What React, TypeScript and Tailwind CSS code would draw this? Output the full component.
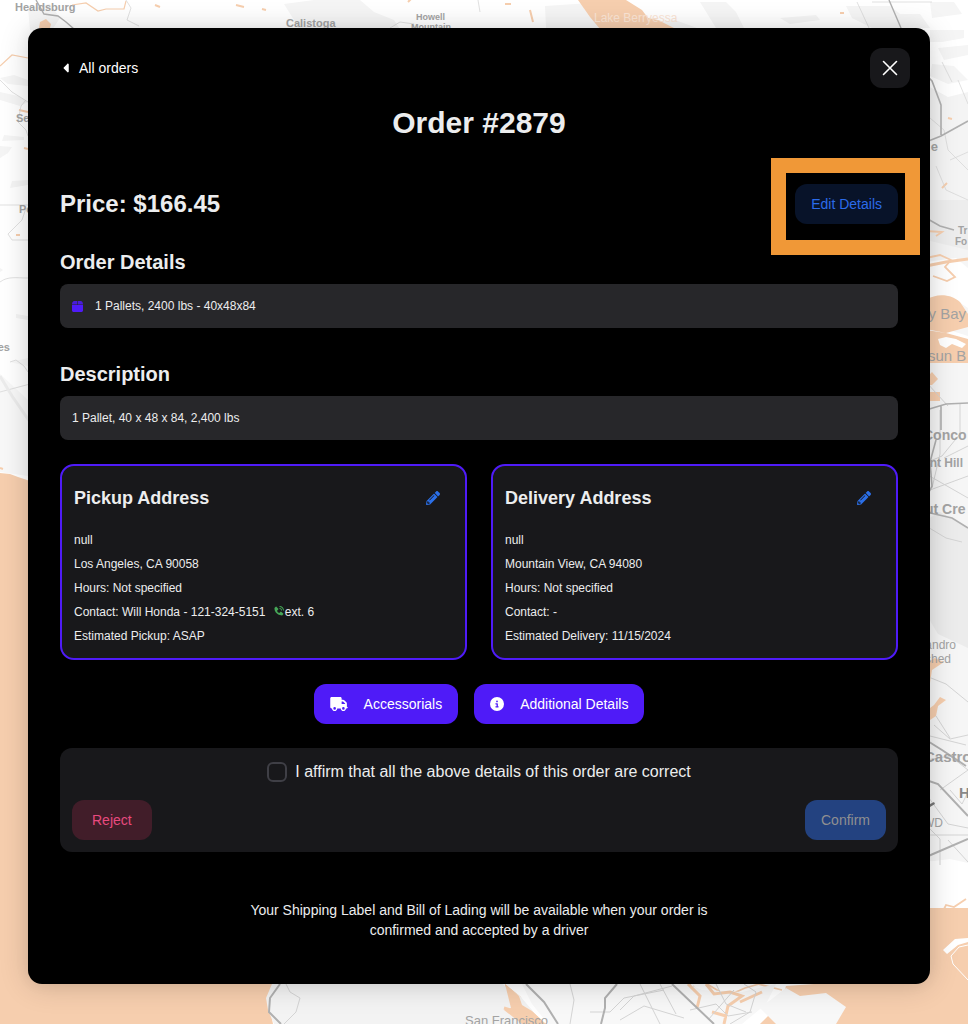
import { useState } from "react";
import type { ReactNode } from "react";
import { BiSolidPhoneCall } from "react-icons/bi";
import { FaPencilAlt } from "react-icons/fa";
import { FaCaretLeft, FaCircleInfo, FaTruck } from "react-icons/fa6";

const pickup = [
  "null",
  "Los Angeles, CA 90058",
  "Hours: Not specified",
  <>
    Contact: Will Honda - 121-324-5151{" "}
    <a href="tel:1213245151" aria-label="Call Will Honda" className="ml-1 inline-block align-baseline">
      <BiSolidPhoneCall className="mb-1 inline size-3 text-[#46a758]" />
    </a>
    ext. 6
  </>,
  "Estimated Pickup: ASAP",
];

const delivery = [
  "null",
  "Mountain View, CA 94080",
  "Hours: Not specified",
  "Contact: -",
  "Estimated Delivery: 11/15/2024",
];

function PackageIcon() {
  return (
    <svg viewBox="0 0 11 11" className="size-[11px] text-[#4f1bf8]" fill="currentColor" aria-hidden="true">
      <path d="M2.4 0h2.8v3.4H0C0 1.500.9 0 2.400 0Zm3.400 0h2.800C10.100 0 11 1.500 11 3.400H5.800Z" opacity=".85" />
      <path d="M0 4h11v5.600c0 .8-.6 1.400-1.400 1.400H1.400C.6 11 0 10.400 0 9.600Z" />
    </svg>
  );
}

function CloseIcon() {
  return (
    <svg viewBox="0 0 16 16" className="size-4" fill="none" stroke="currentColor" strokeWidth="1.6" strokeLinecap="round" aria-hidden="true">
      <path d="M1.5 1.5l13 13M14.5 1.5l-13 13" />
    </svg>
  );
}

function MapBackground() {
  return (
    <svg
      viewBox="0 0 968 1024"
      preserveAspectRatio="xMinYMin slice"
      className="absolute inset-0 h-full w-full font-['Liberation_Sans',Arial,sans-serif]"
      aria-hidden="true"
    >
      <rect width="968" height="1024" fill="#fff" />
      {/* relief */}
      <g fill="#f5f5f5">
        <path d="M28 8l22-4 10 14-8 12H30zM284 4l30-4h46l14 12 20 8 8 12H300l-6-12zM545 6l60-4 40 22 30-4 22 8H546zM700 2h26l10 10 8 16h-28z" />
        <path d="M0 78l14-3 14 5v6l-20-2zM0 92l18 4 10 6-8 4-20-6zM4 135l20 2v3l-22 1zM0 146l12 1-4 6-8 5zM12 181l16-1v5l-18 3zM0 268l3 2-3 2zM16 314l12 2v4l-12-2z" />
        <path d="M10 362l18-4v8l-10-2zM0 374l28 26v76l-28-4z" fill="#f8f8f8" />
        <path d="M780 18l36-3 4 5-30 4zM846 6h44l10 8h20l10 14h-58l-20-10zM930 2h24l8 12-30 4zM930 30h34v8l-22 4h-12zM938 48l30-3v10l-24 5zM932 64l22 2 14 14-20 4-18-8z" />
      </g>
      <path d="M926 85l22 12 20-5v170l-14 4-28-6z" fill="#f4f4f4" />
      <path d="M926 200h42v50l-42-10z" fill="#ededed" />
      <path d="M926 260h42v610l-42-10z" fill="#f6f6f6" />
      <path d="M926 520l14-8 28 16v120l-30-14-12-20z" fill="#ececec" />
      <path d="M926 262l30-4 12 10v40l-18-12-24 2zM930 324l38 12v12l-38-4z" fill="#fff" />
      <path d="M926 862l24-3 18 4v48h-42z" fill="#fff" />

      {/* water */}
      <g fill="#f6ceae">
        <path d="M0 473l10 1 8 3 12 4v480l236 6 12 12-10 20 5 25H0z" />
        <path d="M926 908h42v116H760l20-20 6-18 140-10z" />
        <path d="M926 300c12-8 26-5 34 2l8 12v13l-22 6-20-4zM926 330l20 3 22 6v24h-42z" />
        <path d="M578 0h48l16 10 6 8 10 2 18 9h-76l-10-12zM926 378l6-6 6 7-6 6h-6zM926 392h14v9h-14zM926 665l8-7 10 4-12 8-2 13-4-2z" />
        <path d="M40 22l6-3 5 5-1 4H39zM505 984l16 13 2 9 9 5 14 14h-25l-22-15 9-1-3-15z" />
        <path d="M926 711l8-6 6-8 6 3-8 6-2 10-6 4-4 6z" />
      </g>
      <path d="M938 339l8-2 10 2 10 5-4 4-10-4-6 4-6-3z" fill="#fff" />
      <g fill="none" stroke="#f6ceae" strokeWidth="2">
        <path d="M0 66l12-11 16 3M72 5l14-2 12 8 8-2 18 0 2-8" strokeWidth="1.2" />
        <path d="M926 266l20-4 22-3" strokeWidth="3" />
        <path d="M926 258l14-3 11 5-6 7 10 10-8 4-14-5M926 231l16 1-6 4M942 913l4-8 8 2 12-8M926 667l6-6M693 986l6 12 14 2 4 8-12 16M707 984l20 12 18-8 14-4M758 984l24 6M735 1010l16-10M690 984l4 14" strokeWidth="1.8" />
        <path d="M19 110l9 2M24 148l4 1M408 2l3-3M155 5l5 2M236 5l8 2M262 9l4 1M948 118l4 1M942 188l5-5M16 235h4M0 468l3 1M505 4h6M530 10l3 12M840 13h4" />
      </g>
      <path d="M266 984h236l18 12 12 14 10 14H274l-6-14-2-12 6-14z" fill="#f3f3f3" />
      <path d="M522 984h166l14 6 40 2 34-8-10 20-24 20H548l-16-20z" fill="#f8f8f8" />
      <path d="M760 1008l26-20 14 8 26-3 20 14-10 17h-60z" fill="#f8f8f8" />
      <path d="M505 984l14 12 3 9 10 6 14 13h-24l-18-14 7-2-3-12z" fill="#f6ceae" />
      <g fill="none" stroke="#f6ceae" strokeWidth="3">
        <path d="M504 1008l20 6M688 984l12 12-3 12M706 984l8 10 16-2 12 4-14 10-4 18M712 1012l14 4M740 1002l22-10" />
      </g>

      {/* shoreline spits */}
      <path d="M943 950l12-11 13-1v4l-10 3-11 9z" fill="#fff" />
      <path d="M968 945l-9 2-8 9 2 8 15 16" fill="none" stroke="#fff" strokeWidth="1" />

      {/* minor roads */}
      <g fill="none" stroke="#d4d4d4">
        <path d="M26 100l-5 6-3 16 8 8 2 6M0 80l12 12 16 10M0 205h28M26 208l-4 12-14 14 4 6h16M0 282c8-6 16-4 28-4M10 362l6-2 8 6 4 6M0 392l30-8" strokeWidth="0.7" />
        <path d="M0 376l12 20 18 26" stroke="#ececec" strokeWidth="3" />
        <path d="M126 0l5 8-4 12 12 6M390 28l10-6 14 2M478 0l2 12M857 2l12 26M872 2h60M942 62l10 20M930 118l14 12 4 20 20 20M950 160l18-8M936 166l10 24 22 10M958 80l10 24" strokeWidth="0.7" />
        <path d="M926 382l22 24M940 410v44l-8 34M960 404v30l-18 22-14 6M944 458l24-12M926 474l42 24M930 490l38-14M926 526l20 12 16 4M926 676l20 8 22 18M934 725l16 14 18-4M926 735l40 10M936 716l14 22M926 760l24-4 18 14M940 790l28-20M926 794l22 30 20 4M940 865v-26l-12-12M926 835h42M948 840l20 22M950 790l12 14 6-12" />
        <path d="M286 984l4 8 10 6-4 14-12 12M570 984l4 16-4 24M590 1012h20l14-14 40-8M620 1010l14-14 38-10M640 984l10 20 10 20M660 984l16 30M620 1020l24-14 40 12M690 1010l26-6 12 12 24-4M708 1020l26-30M744 984l12 8-6 20-20 12M716 984l10 20 20 8" />
      </g>
      {/* highways */}
      <g fill="none" stroke="#b0b0b0" strokeWidth="2">
        <path d="M36 0l8 14 14 2 8 6 8 7M889 0l12 28" strokeWidth="1.4" />
        <path d="M926 75l6 6 9 24v30M926 142l15-6 27-15M926 218l14 8 14 4" strokeWidth="1.6" />
        <path d="M926 410l20-6 22-1M941 406v24M936 440l-6 22 2 24-6 12M926 512l26 6 16 10" strokeWidth="1.6" />
        <path d="M926 740l16 10 24 16M926 780l12 4 30 32M926 857l42-18" />
        <path d="M280 984l-10 14-1 14 12 12M526 984l18 18 14 22M617 984l-12 14v10l-4 16M672 984l42 40" />
      </g>
      <path d="M926 806l8-4 1 2-5 3v5l-4-2z" fill="#777" />

      {/* place names */}
      <g fill="#a3a3a3" fontSize="11" fontWeight="700">
        <text x="15" y="11">Healdsburg</text>
        <text x="286" y="27">Calistoga</text>
        <text x="416" y="20" fontSize="9">Howell</text>
        <text x="411" y="30" fontSize="9">Mountain</text>
        <text x="16" y="122">Se</text>
        <text x="19" y="213">Pe</text>
        <text x="10" y="351" textAnchor="end">es</text>
        <text x="938" y="151" textAnchor="end" fontSize="13">e</text>
        <text x="958" y="234" fontSize="10">Tr</text>
        <text x="955" y="245" fontSize="10">Fo</text>
        <text x="923" y="440" fontSize="14">Conco</text>
        <text x="963" y="467" textAnchor="end" fontSize="12">nt Hill</text>
        <text x="925" y="514" fontSize="14">ut Cre</text>
        <text x="924" y="762" fontSize="15">Castro</text>
        <text x="959" y="798" fontSize="15" fill="#888">H</text>
      </g>
      <g fill="#a3a3a3" fontSize="12">
        <text x="594" y="22" fill="#fbe5d5">Lake Berryessa</text>
        <text x="966" y="319" textAnchor="end" fontSize="15">y Bay</text>
        <text x="928" y="361" fontSize="15">sun B</text>
        <text x="956" y="649" textAnchor="end">andro</text>
        <text x="951" y="663" textAnchor="end">shed</text>
        <text x="943" y="827" textAnchor="end">WD</text>
        <text x="465" y="1025" fontSize="13">San Francisco</text>
      </g>
    </svg>
  );
}

function DetailSection({ title, children }: { title: string; children: ReactNode }) {
  return (
    <section>
      <h3 className="text-xl font-bold">{title}</h3>
      <div className="mt-2 flex h-11 items-center rounded-lg bg-[#27272a] px-3 text-xs">{children}</div>
    </section>
  );
}

function AddressCard({ title, lines }: { title: string; lines: ReactNode[] }) {
  return (
    <article className="rounded-[14px] border-2 border-[#4f1bf8] bg-[#18181b] px-3 pt-3 pb-2.5">
      <div className="flex items-center justify-between">
        <h4 className="text-lg font-bold">{title}</h4>
        <button type="button" aria-label={`Edit ${title}`} className="flex size-10 items-center justify-center">
          <FaPencilAlt className="size-3.5 text-[#2b6fe8]" />
        </button>
      </div>
      <div className="mt-2.5 text-xs leading-6">
        {lines.map((line, index) => (
          <p key={index} className="h-6">
            {line}
          </p>
        ))}
      </div>
    </article>
  );
}

export default function App() {
  const [affirmed, setAffirmed] = useState(false);

  return (
    <div className="relative flex min-h-screen overflow-hidden pt-7 pr-[38px] pb-10 pl-7 font-['Liberation_Sans',Arial,sans-serif] text-[#ecedee]">
      <MapBackground />
      <main
        role="dialog"
        aria-labelledby="order-title"
        className="relative w-full rounded-[14px] bg-black pb-10 shadow-[0_0_15px_rgba(0,0,0,0.06),0_2px_30px_rgba(0,0,0,0.16)]"
      >
        <div className="flex items-center justify-between pt-5 pr-5 pl-8">
          <button type="button" className="flex h-10 items-center gap-[5px] text-sm text-white">
            <FaCaretLeft className="size-3.5" />
            All orders
          </button>
          <button
            type="button"
            aria-label="Close"
            className="flex size-10 items-center justify-center rounded-xl bg-[#18181b] text-white"
          >
            <CloseIcon />
          </button>
        </div>

        <div className="px-8">
          <h1 id="order-title" className="mt-[17px] text-center text-3xl font-bold">
            Order #2879
          </h1>

          <div className="mt-[43px] flex items-center justify-between">
            <h2 className="text-2xl font-bold">Price: $166.45</h2>
            <div className="relative">
              <button type="button" className="h-10 rounded-xl bg-[#081329] px-4 text-sm text-[#2b6bea]">
                Edit Details
              </button>
              <div className="pointer-events-none absolute -top-[26px] -right-[22px] -bottom-[31px] -left-6 border-[15px] border-[#f09837]" />
            </div>
          </div>

          <div className="mt-6 grid gap-8">
            <DetailSection title="Order Details">
              <PackageIcon />
              <span className="ml-3">1 Pallets, 2400 lbs - 40x48x84</span>
            </DetailSection>
            <DetailSection title="Description">1 Pallet, 40 x 48 x 84, 2,400 lbs</DetailSection>
          </div>

          <div className="mt-6 grid grid-cols-2 gap-6">
            <AddressCard title="Pickup Address" lines={pickup} />
            <AddressCard title="Delivery Address" lines={delivery} />
          </div>

          <div className="mt-6 flex justify-center gap-4 text-sm text-white">
            <button type="button" className="flex h-10 items-center gap-4 rounded-xl bg-[#4f1bf8] px-4">
              <FaTruck className="h-3.5 w-[18px]" />
              Accessorials
            </button>
            <button type="button" className="flex h-10 items-center gap-4 rounded-xl bg-[#4f1bf8] px-4">
              <FaCircleInfo className="size-3.5" />
              Additional Details
            </button>
          </div>

          <div className="mt-6 rounded-xl bg-[#18181b] p-3">
            <label className="flex items-center justify-center gap-2 text-base">
              <input
                type="checkbox"
                checked={affirmed}
                onChange={(event) => setAffirmed(event.target.checked)}
                className="size-5 appearance-none rounded-md border-2 border-[#3f3f46] checked:bg-[#4f1bf8]"
              />
              I affirm that all the above details of this order are correct
            </label>
            <div className="mt-4 flex justify-between text-sm">
              <button type="button" className="h-10 rounded-xl bg-[#411d29] px-5 text-[#e84a7f]">
                Reject
              </button>
              <button
                type="button"
                disabled={!affirmed}
                className="h-10 rounded-xl bg-[#2b6bea] px-4 text-white disabled:bg-[#234280] disabled:text-[#8f8f91]"
              >
                Confirm
              </button>
            </div>
          </div>

          <p className="mx-auto mt-12 max-w-[480px] text-center text-sm">
            Your Shipping Label and Bill of Lading will be available when your order is confirmed and accepted by a
            driver
          </p>
        </div>
      </main>
    </div>
  );
}
